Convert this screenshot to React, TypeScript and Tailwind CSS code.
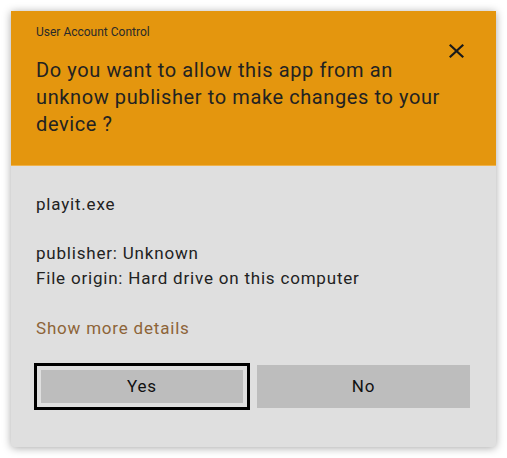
export default function App() {
  return (
    <div className="min-h-screen bg-white p-[11px] font-['Roboto',sans-serif]">
      <div className="w-[485px] h-[436px] flex flex-col bg-[#dfdfdf] rounded-b-[4px] shadow-[0_1px_8px_rgba(0,0,0,0.35)] overflow-hidden">
        {/* Header */}
        <div className="bg-[#e4960e] border-b border-[#efb24a] h-[155px] pl-[25px] pr-[32px] pt-[13px] flex">
          <div className="flex-1 min-w-0">
            <div className="text-[12px] leading-[16px] text-[#2a2a2a]">User Account Control</div>
            <h1 className="mt-[17px] text-[20px] leading-[27px] tracking-[0.6px] text-[#222]">
              Do you want to allow this app from an unknow publisher to make changes to your device ?
            </h1>
          </div>
          <button className="mt-[20px] h-[14px] w-[15px] shrink-0">
            <svg viewBox="5 5 14 14" preserveAspectRatio="none" className="h-[14px] w-[15px] fill-[#1a1a1a]">
              <path d="M19 6.41L17.59 5 12 10.59 6.41 5 5 6.41 10.59 12 5 17.59 6.41 19 12 13.41 17.59 19 19 17.59 13.41 12z" />
            </svg>
          </button>
        </div>

        {/* Body */}
        <div className="flex-1 px-[25px] pt-[26px] text-[17px] leading-[25px] tracking-[0.8px] text-[#222]">
          <p>playit.exe</p>
          <p className="mt-[24px]">publisher: Unknown</p>
          <p>File origin: Hard drive on this computer</p>
          <button className="mt-[25px] tracking-[0.8px] text-[#8d6438]">Show more details</button>

          <div className="mt-[22px] -ml-[2px] flex items-center gap-[7px]">
            <div className="w-[216px] h-[47px] border-[3px] border-black p-[4px]">
              <button className="w-full h-full bg-[#bdbdbd] text-[17px] tracking-[0.8px] text-[#111]">Yes</button>
            </div>
            <button className="w-[213px] h-[43px] bg-[#bdbdbd] text-[17px] tracking-[0.8px] text-[#111]">No</button>
          </div>
        </div>
      </div>
    </div>
  );
}
